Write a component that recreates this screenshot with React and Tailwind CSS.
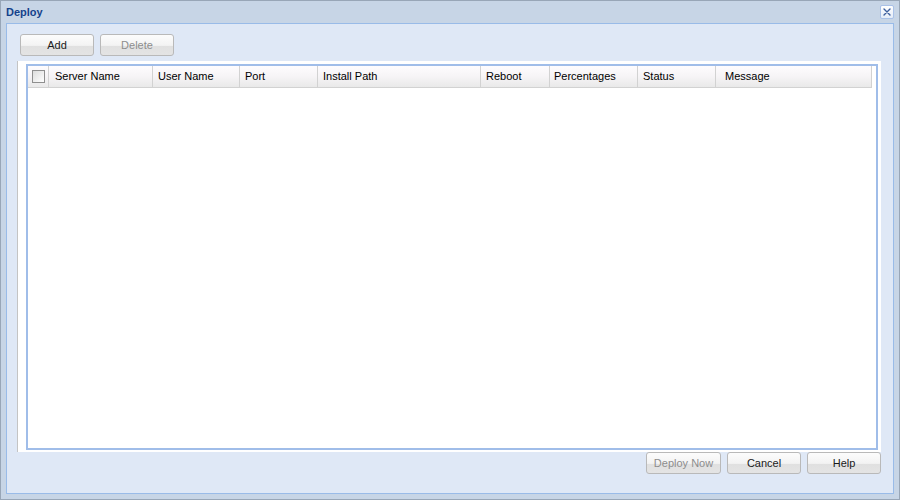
import React from 'react';

const font = { fontFamily: '"Liberation Sans", Arial, sans-serif' };

const columns = [
  { label: 'Server Name', width: 'w-[104px]', pad: 'pl-[6px]' },
  { label: 'User Name', width: 'w-[87px]', pad: 'pl-[5px]' },
  { label: 'Port', width: 'w-[78px]', pad: 'pl-[5px]' },
  { label: 'Install Path', width: 'w-[163px]', pad: 'pl-[5px]' },
  { label: 'Reboot', width: 'w-[69px]', pad: 'pl-[5px]' },
  { label: 'Percentages', width: 'w-[88px]', pad: 'pl-[4px]' },
  { label: 'Status', width: 'w-[78px]', pad: 'pl-[5px]' },
  { label: 'Message', width: 'w-[155px]', pad: 'pl-[9px]' },
];

const Button = ({ children, disabled, width = 'w-[74px]' }) => (
  <div
    className={`${width} h-[22px] rounded-[3px] border border-[#b9b9b9] bg-[linear-gradient(to_bottom,#fcfcfc_0%,#f3f3f3_52%,#e0e0e0_56%,#e4e4e4_100%)] flex items-center justify-center pt-px`}
  >
    <span
      className={`text-[11px] font-normal leading-none ${disabled ? 'text-[#8d8d8d]' : 'text-[#1a1a1a]'}`}
    >
      {children}
    </span>
  </div>
);

export default function App() {
  return (
    <div
      className="w-[900px] h-[500px] border border-[#98a6b7] bg-[#c7d5e6] flex flex-col"
      style={font}
    >
      {/* Title bar */}
      <div className="h-[22px] pl-[5px] pr-[5px] flex items-center justify-between">
        <span className="text-[11px] font-bold text-[#15428b]">Deploy</span>
        <div className="w-[14px] h-[14px] rounded-[2px] border border-[#a9c1e8] bg-[linear-gradient(to_bottom,#ffffff,#e4ecf8)] flex items-center justify-center">
          <svg width="10" height="10" viewBox="0 0 10 10">
            <path d="M2 2 L8 8 M8 2 L2 8" stroke="#3d5f9e" strokeWidth="1.4" strokeLinecap="round" />
          </svg>
        </div>
      </div>

      {/* Body */}
      <div className="flex-1 mx-[5px] mb-[5px] border border-[#99bbe8] bg-[#dfe8f6] flex flex-col">
        <div className="pt-[10px] pl-[13px] flex gap-[6px]">
          <Button>Add</Button>
          <Button disabled>Delete</Button>
        </div>

        <div className="flex-1 mt-[5px] ml-[10px] mr-[12px] border-l border-[#c4c4c4] bg-white pl-[8px] pr-[3px] pt-[3px] pb-[2px] flex">
          <div className="flex-1 border-2 border-[#a0bde9] bg-white">
            <div className="h-[22px] flex w-[844px] border-b border-r border-[#d2d2d2] bg-[linear-gradient(to_bottom,#fefcfe,#f6f4f6_50%,#e9e9e9)]">
              <div className="w-[21px] flex items-center justify-center border-r border-[#d2d2d2]">
                <div className="w-[13px] h-[13px] border border-[#8f8f8f] bg-[linear-gradient(135deg,#dcdcdc,#ffffff)]" />
              </div>
              {columns.map((c, i) => (
                <div
                  key={c.label}
                  className={`${c.width} ${c.pad} flex items-center text-[11px] text-black ${
                    i < columns.length - 1 ? 'border-r border-[#d2d2d2]' : ''
                  }`}
                >
                  {c.label}
                </div>
              ))}
            </div>
          </div>
        </div>

        <div className="pr-[12px] pb-[19px] flex justify-end gap-[6px]">
          <Button disabled width="w-[75px]">Deploy Now</Button>
          <Button>Cancel</Button>
          <Button>Help</Button>
        </div>
      </div>
    </div>
  );
}
